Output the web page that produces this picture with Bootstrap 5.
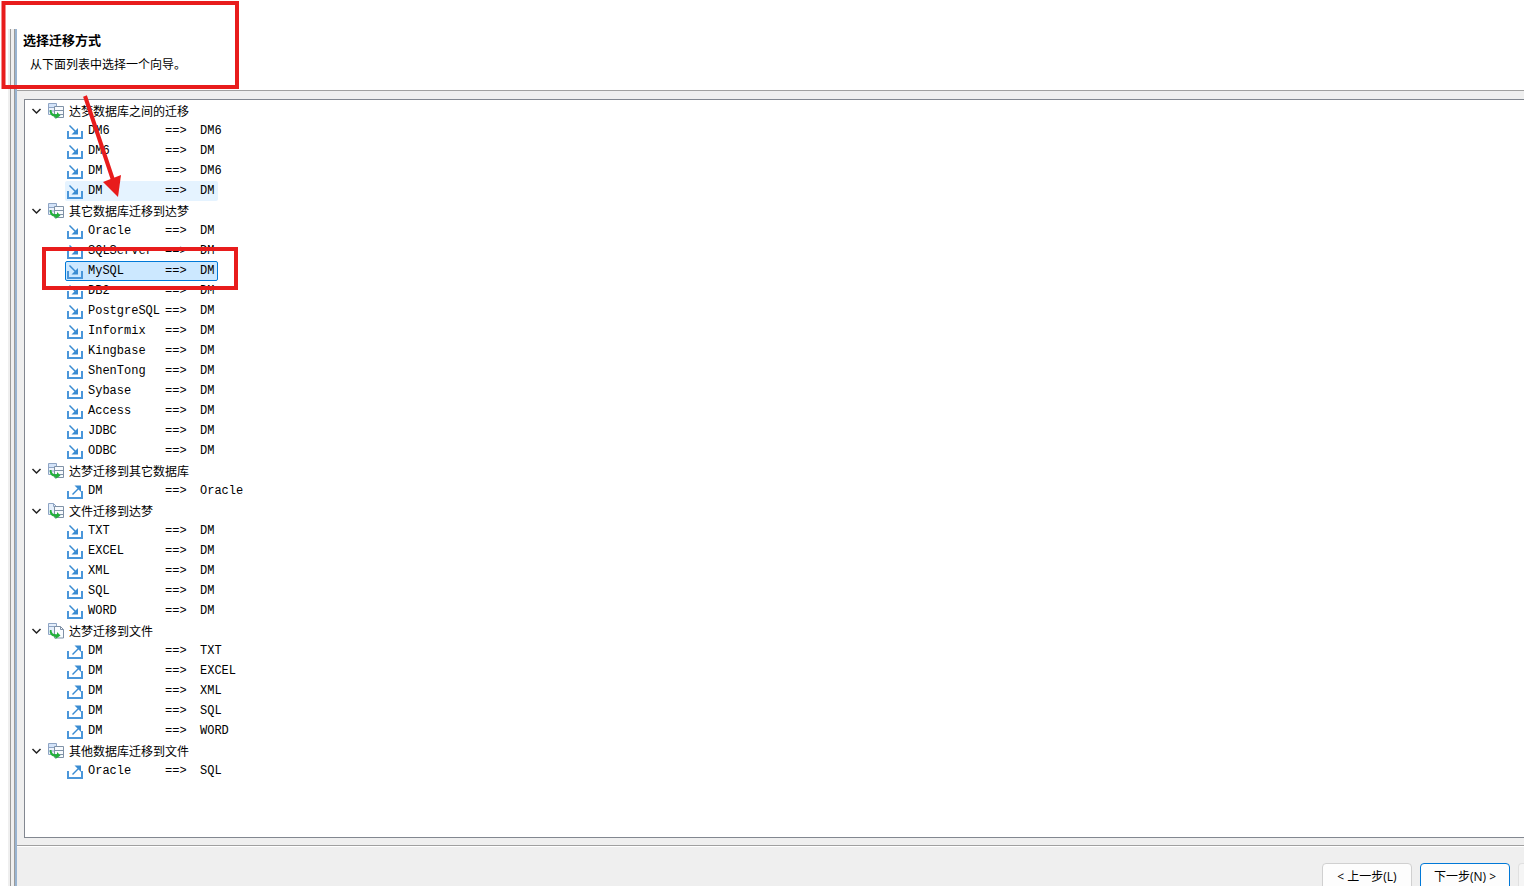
<!DOCTYPE html>
<html lang="zh-CN">
<head>
<meta charset="utf-8">
<meta name="viewport" content="width=device-width, initial-scale=1">
<title>选择迁移方式</title>
<link href="https://cdn.jsdelivr.net/npm/bootstrap@5.3.0/dist/css/bootstrap.min.css" rel="stylesheet">
<style>
  body { font: 12px/20px "Noto Sans CJK SC", sans-serif; color: #000; background: #fff; }
  .wizard { padding: 29px 0 0 8px; }
  .rail { flex: none; width: 9px; background: linear-gradient(to right, #efefef 2px, #9a9a9a 2px 3px, #efefef 3px 6px, #9a9a9a 6px 7px, #99b4d1 7px); }
  .wizard-main { min-width: 0; background: #efefef; }
  .wizard-head { height: 62px; padding: 1px 6px; background: #fff; border-bottom: 1px solid #a0a0a0; }
  .wizard-head h1 { font-size: 13px; line-height: 20px; font-weight: 700; margin: 0 0 4px; }
  .wizard-head p { margin: 0 7px; }
  .tree-pane { margin: 8px 0 7px 7px; padding: 1px 0; background: #fff; border: 1px solid #828790; border-right: 0; min-height: 0; overflow: hidden; }
  .tree-pane summary { list-style: none; display: flex; align-items: center; height: 20px; line-height: 18px; padding-left: 6px; cursor: default; }
  .tree-pane summary::-webkit-details-marker { display: none; }
  .chev { width: 11px; height: 10px; margin-right: 6px; }
  .ico { width: 16px; height: 16px; flex: none; margin-right: 5px; }
  .leaves { margin: 0 0 0 40px; }
  .leaf { display: grid; grid-template-columns: 21px 77px 35px auto; align-items: center; height: 20px; padding: 0 3px 0 1px; border: 1px solid transparent; border-radius: 2px; background: none; color: #000; font: 12px/18px "Liberation Mono", monospace; text-align: left; }
  .leaf:hover, .leaf.hot { background: #e5f3ff; }
  .leaf.chosen { background: #cce8ff; border-color: #0078d7; }
  .wizard-foot { height: 41px; padding-top: 17px; border-top: 1px solid #a0a0a0; box-shadow: inset 0 1px #fff; }
  .wizard-foot .btn { flex: none; width: 90px; height: 28px; padding: 2px 0; font: 12px/20px "Open Sans", "Noto Sans CJK SC", sans-serif; background: #fdfdfd; border: 1px solid #d0d0d0; border-radius: 4px; color: #000; }
  .wizard-foot .btn.go { border-color: #0078d7; }
  .wizard-foot .btn:disabled { width: 6px; background: #f5f5f5; border-color: #e0e0e0; border-right: 0; border-radius: 4px 0 0 4px; opacity: 1; }
  .marks { width: 244px; height: 294px; pointer-events: none; }
</style>
<script src="https://cdn.jsdelivr.net/npm/bootstrap@5.3.0/dist/js/bootstrap.bundle.min.js"></script>
</head>
<body class="position-relative vh-100 overflow-hidden">
<svg class="d-none" aria-hidden="true">
  <symbol id="chev" viewBox="0 0 11 10"><path d="M1.5 3 5.500 7 9.500 3" fill="none" stroke="#222" stroke-width="1.500"/></symbol>
  <symbol id="turn" viewBox="0 0 16 16"><path d="M2 7c-.8 3 .5 6 5.500 7v2l5-3.500L9 9v2.200C5 11.500 3.500 10 3.500 7z" fill="#22b03a"/></symbol>
  <symbol id="sheet" viewBox="0 0 16 16"><path d="M6.500 3.500h9v11h-9z" fill="#f7fafd" stroke="#7f91a6"/><path d="M6.500 7.500h9M6.500 11.500h9" stroke="#7f91a6"/></symbol>
  <symbol id="db" viewBox="0 0 16 16"><path d="M.5.5h8v11h-8z" fill="#eef4fc" stroke="#8ea4c4"/><path d="M1 1h7v3H1z" fill="#d3e3f8"/><path d="M.5 4.500h8M.5 8h8" stroke="#8ea4c4"/><use href="#sheet"/><use href="#turn"/></symbol>
  <symbol id="from-file" viewBox="0 0 16 16"><path d="M.5.5h5l3 3v8h-8z" fill="#e5effb" stroke="#8ea4c4"/><path d="M5.500.5v3h3" fill="none" stroke="#8ea4c4"/><use href="#sheet"/><use href="#turn"/></symbol>
  <symbol id="to-file" viewBox="0 0 16 16"><path d="M.5.5h8v11h-8z" fill="#e5effb" stroke="#8ea4c4"/><path d="M.5 3.500h8" stroke="#8ea4c4"/><path d="M6.500 3.500h6l3 3v8.500h-9z" fill="#fafcff" stroke="#7f91a6"/><path d="M12.500 3.500v3h3" fill="none" stroke="#7f91a6"/><use href="#turn"/></symbol>
  <symbol id="in" viewBox="0 0 16 16"><path d="M1 8v7h14V8" fill="none" stroke="#4a96da" stroke-width="2"/><path d="m2.500 2.500 6 6" stroke="#3a8cd2" stroke-width="1.500"/><path d="M11 5v6.500H4.500z" fill="#3a8cd2"/></symbol>
  <symbol id="out" viewBox="0 0 16 16"><path d="M1 8v7h14V8" fill="none" stroke="#4a96da" stroke-width="2"/><path d="m5.500 11.500 6-6" stroke="#3a8cd2" stroke-width="1.500"/><path d="M7.500 2.500H14V9z" fill="#3a8cd2"/></symbol>
</svg>

<div class="wizard d-flex h-100">
  <div class="rail"></div>
  <main class="wizard-main d-flex flex-column flex-grow-1">
    <header class="wizard-head">
      <h1>选择迁移方式</h1>
      <p>从下面列表中选择一个向导。</p>
    </header>

    <section class="tree-pane flex-grow-1">
      <details open>
        <summary><svg class="chev"><use href="#chev"/></svg><svg class="ico"><use href="#db"/></svg>达梦数据库之间的迁移</summary>
        <ul class="leaves list-unstyled">
          <li><button class="leaf"><svg class="ico"><use href="#in"/></svg><span>DM6</span><span>==&gt;</span><span>DM6</span></button></li>
          <li><button class="leaf"><svg class="ico"><use href="#in"/></svg><span>DM6</span><span>==&gt;</span><span>DM</span></button></li>
          <li><button class="leaf"><svg class="ico"><use href="#in"/></svg><span>DM</span><span>==&gt;</span><span>DM6</span></button></li>
          <li><button class="leaf hot"><svg class="ico"><use href="#in"/></svg><span>DM</span><span>==&gt;</span><span>DM</span></button></li>
        </ul>
      </details>
      <details open>
        <summary><svg class="chev"><use href="#chev"/></svg><svg class="ico"><use href="#db"/></svg>其它数据库迁移到达梦</summary>
        <ul class="leaves list-unstyled">
          <li><button class="leaf"><svg class="ico"><use href="#in"/></svg><span>Oracle</span><span>==&gt;</span><span>DM</span></button></li>
          <li><button class="leaf"><svg class="ico"><use href="#in"/></svg><span>SQLServer</span><span>==&gt;</span><span>DM</span></button></li>
          <li><button class="leaf chosen"><svg class="ico"><use href="#in"/></svg><span>MySQL</span><span>==&gt;</span><span>DM</span></button></li>
          <li><button class="leaf"><svg class="ico"><use href="#in"/></svg><span>DB2</span><span>==&gt;</span><span>DM</span></button></li>
          <li><button class="leaf"><svg class="ico"><use href="#in"/></svg><span>PostgreSQL</span><span>==&gt;</span><span>DM</span></button></li>
          <li><button class="leaf"><svg class="ico"><use href="#in"/></svg><span>Informix</span><span>==&gt;</span><span>DM</span></button></li>
          <li><button class="leaf"><svg class="ico"><use href="#in"/></svg><span>Kingbase</span><span>==&gt;</span><span>DM</span></button></li>
          <li><button class="leaf"><svg class="ico"><use href="#in"/></svg><span>ShenTong</span><span>==&gt;</span><span>DM</span></button></li>
          <li><button class="leaf"><svg class="ico"><use href="#in"/></svg><span>Sybase</span><span>==&gt;</span><span>DM</span></button></li>
          <li><button class="leaf"><svg class="ico"><use href="#in"/></svg><span>Access</span><span>==&gt;</span><span>DM</span></button></li>
          <li><button class="leaf"><svg class="ico"><use href="#in"/></svg><span>JDBC</span><span>==&gt;</span><span>DM</span></button></li>
          <li><button class="leaf"><svg class="ico"><use href="#in"/></svg><span>ODBC</span><span>==&gt;</span><span>DM</span></button></li>
        </ul>
      </details>
      <details open>
        <summary><svg class="chev"><use href="#chev"/></svg><svg class="ico"><use href="#db"/></svg>达梦迁移到其它数据库</summary>
        <ul class="leaves list-unstyled">
          <li><button class="leaf"><svg class="ico"><use href="#out"/></svg><span>DM</span><span>==&gt;</span><span>Oracle</span></button></li>
        </ul>
      </details>
      <details open>
        <summary><svg class="chev"><use href="#chev"/></svg><svg class="ico"><use href="#from-file"/></svg>文件迁移到达梦</summary>
        <ul class="leaves list-unstyled">
          <li><button class="leaf"><svg class="ico"><use href="#in"/></svg><span>TXT</span><span>==&gt;</span><span>DM</span></button></li>
          <li><button class="leaf"><svg class="ico"><use href="#in"/></svg><span>EXCEL</span><span>==&gt;</span><span>DM</span></button></li>
          <li><button class="leaf"><svg class="ico"><use href="#in"/></svg><span>XML</span><span>==&gt;</span><span>DM</span></button></li>
          <li><button class="leaf"><svg class="ico"><use href="#in"/></svg><span>SQL</span><span>==&gt;</span><span>DM</span></button></li>
          <li><button class="leaf"><svg class="ico"><use href="#in"/></svg><span>WORD</span><span>==&gt;</span><span>DM</span></button></li>
        </ul>
      </details>
      <details open>
        <summary><svg class="chev"><use href="#chev"/></svg><svg class="ico"><use href="#to-file"/></svg>达梦迁移到文件</summary>
        <ul class="leaves list-unstyled">
          <li><button class="leaf"><svg class="ico"><use href="#out"/></svg><span>DM</span><span>==&gt;</span><span>TXT</span></button></li>
          <li><button class="leaf"><svg class="ico"><use href="#out"/></svg><span>DM</span><span>==&gt;</span><span>EXCEL</span></button></li>
          <li><button class="leaf"><svg class="ico"><use href="#out"/></svg><span>DM</span><span>==&gt;</span><span>XML</span></button></li>
          <li><button class="leaf"><svg class="ico"><use href="#out"/></svg><span>DM</span><span>==&gt;</span><span>SQL</span></button></li>
          <li><button class="leaf"><svg class="ico"><use href="#out"/></svg><span>DM</span><span>==&gt;</span><span>WORD</span></button></li>
        </ul>
      </details>
      <details open>
        <summary><svg class="chev"><use href="#chev"/></svg><svg class="ico"><use href="#db"/></svg>其他数据库迁移到文件</summary>
        <ul class="leaves list-unstyled">
          <li><button class="leaf"><svg class="ico"><use href="#out"/></svg><span>Oracle</span><span>==&gt;</span><span>SQL</span></button></li>
        </ul>
      </details>
    </section>

    <footer class="wizard-foot d-flex justify-content-end gap-2 flex-shrink-0">
      <button class="btn" type="button">&lt; 上一步(L)</button>
      <button class="btn go" type="button">下一步(N) &gt;</button>
      <button class="btn" type="button" disabled></button>
    </footer>
  </main>
</div>

<!-- Red call-outs drawn over the wizard -->
<svg class="marks position-absolute top-0 start-0" viewBox="0 0 244 294" aria-hidden="true">
  <g fill="none" stroke="#e81c1c" stroke-width="4">
    <path d="M3.500 3h233.500v84H3.500z"/>
    <path d="M44 249h192v39H44z"/>
    <path d="m85 96 28 84"/>
  </g>
  <path d="m103 182 18-7-3 22z" fill="#e81c1c"/>
</svg>
</body>
</html>
